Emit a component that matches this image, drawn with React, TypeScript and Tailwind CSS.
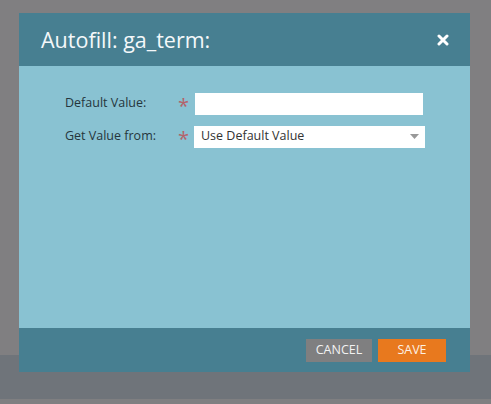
import React from "react";

const font = { fontFamily: '"Open Sans", "Liberation Sans", sans-serif' };

export default function App() {
  return (
    <div className="relative h-[404px] w-[491px] overflow-hidden" style={font}>
      {/* dimmed page behind the dialog */}
      <div className="flex h-full flex-col">
        <div className="flex-1 bg-[#807f81]" />
        <div className="h-[44px] bg-[#6f747a]" />
        <div className="h-[5px] bg-[#7f7f81]" />
      </div>

      {/* dialog */}
      <div className="absolute left-[19px] top-[13px] flex h-[359px] w-[451px] flex-col">
        <div className="flex h-[53px] items-center justify-between bg-[#477f91] pl-[22px] pr-[21px]">
          <h2 className="text-[21.5px] leading-none text-[#f4f8fa]">Autofill: ga_term:</h2>
          <svg width="12" height="12" viewBox="0 0 12 12">
            <path d="M2 2 L10 10 M10 2 L2 10" stroke="#fff" strokeWidth="3" strokeLinecap="round" />
          </svg>
        </div>

        <div className="flex-1 bg-[#89c2d2] pl-[46px] pt-[26px]">
          <div className="flex h-[23px] items-center">
            <span className="w-[113px] text-[12.5px] text-[#25363d]">Default Value:</span>
            <span className="mt-[4px] w-[17px] text-[20px] leading-none text-[#b4626a]">*</span>
            <div className="h-[22px] w-[228px] bg-white" />
          </div>
          <div className="mt-[10px] flex h-[23px] items-center">
            <span className="w-[113px] text-[12.5px] text-[#25363d]">Get Value from:</span>
            <span className="mt-[4px] w-[16px] text-[20px] leading-none text-[#b4626a]">*</span>
            <div className="flex h-[22px] w-[231px] items-center justify-between bg-white pl-[7px] pr-[6px]">
              <span className="text-[12.5px] text-[#333]">Use Default Value</span>
              <svg width="9" height="5" viewBox="0 0 9 5">
                <path d="M0 0 H9 L4.5 5 Z" fill="#999" />
              </svg>
            </div>
          </div>
        </div>

        <div className="flex h-[44px] items-center justify-end gap-[6px] bg-[#477f91] pr-[24px]">
          <button className="h-[23px] w-[66px] bg-[#7f7f80] text-[12.5px] text-[#f2f2f2]">CANCEL</button>
          <button className="h-[23px] w-[68px] bg-[#e8791e] text-[12.5px] text-[#fdf1e4]">SAVE</button>
        </div>
      </div>
    </div>
  );
}
